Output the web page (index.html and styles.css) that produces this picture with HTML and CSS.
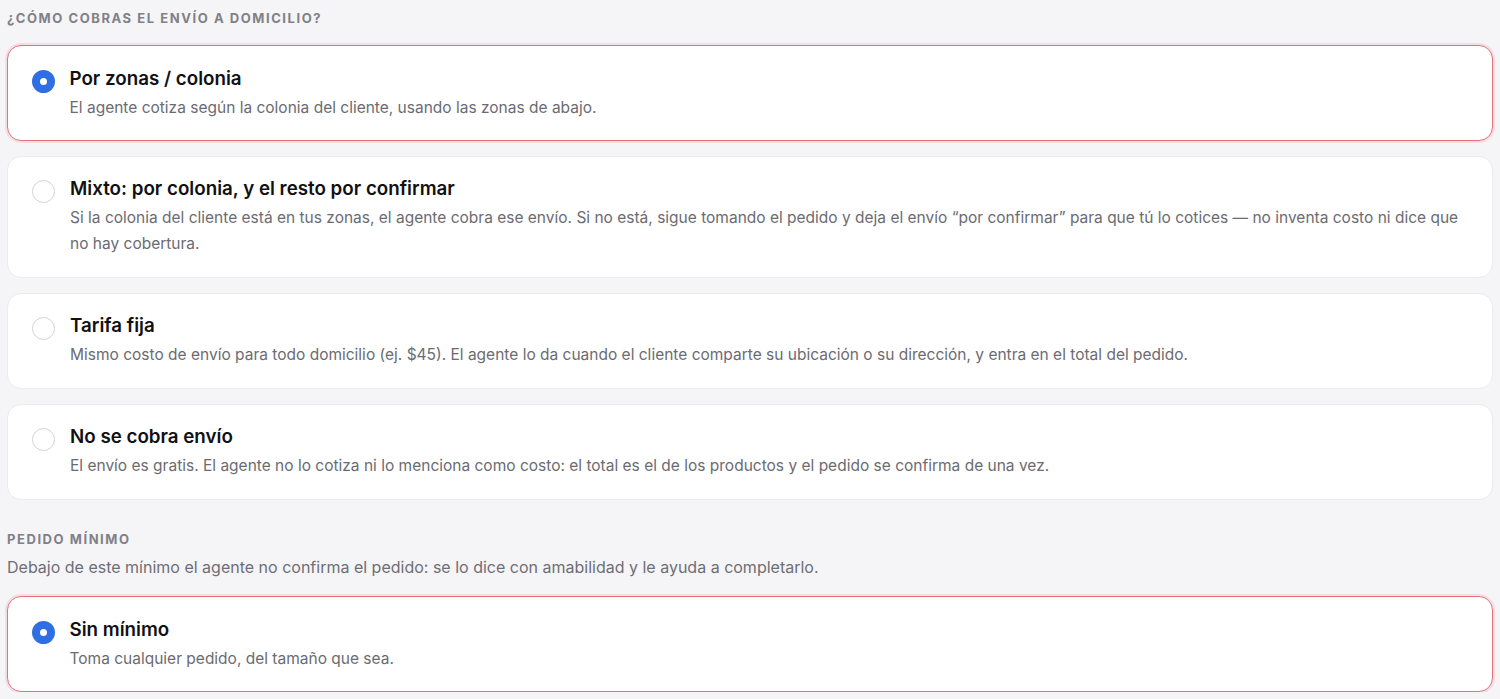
FILE: index.html
```html
<!DOCTYPE html>
<html lang="es">
<head>
<meta charset="utf-8">
<link rel="stylesheet" href="styles.css">
</head>
<body>
<main class="page">
  <section class="section">
    <h2 class="section-title">¿Cómo cobras el envío a domicilio?</h2>
    <div class="options">
      <label class="option selected">
        <span class="radio"></span>
        <span class="option-body">
          <span class="option-title">Por zonas / colonia</span>
          <span class="option-desc">El agente cotiza según la colonia del cliente, usando las zonas de abajo.</span>
        </span>
      </label>
      <label class="option">
        <span class="radio"></span>
        <span class="option-body">
          <span class="option-title">Mixto: por colonia, y el resto por confirmar</span>
          <span class="option-desc">Si la colonia del cliente está en tus zonas, el agente cobra ese envío. Si no está, sigue tomando el pedido y deja el envío “por confirmar” para que tú lo cotices — no inventa costo ni dice que no hay cobertura.</span>
        </span>
      </label>
      <label class="option">
        <span class="radio"></span>
        <span class="option-body">
          <span class="option-title">Tarifa fija</span>
          <span class="option-desc">Mismo costo de envío para todo domicilio (ej. $45). El agente lo da cuando el cliente comparte su ubicación o su dirección, y entra en el total del pedido.</span>
        </span>
      </label>
      <label class="option">
        <span class="radio"></span>
        <span class="option-body">
          <span class="option-title">No se cobra envío</span>
          <span class="option-desc">El envío es gratis. El agente no lo cotiza ni lo menciona como costo: el total es el de los productos y el pedido se confirma de una vez.</span>
        </span>
      </label>
    </div>
  </section>
  <section class="section section-second">
    <h2 class="section-title">Pedido mínimo</h2>
    <p class="section-desc">Debajo de este mínimo el agente no confirma el pedido: se lo dice con amabilidad y le ayuda a completarlo.</p>
    <div class="options">
      <label class="option selected">
        <span class="radio"></span>
        <span class="option-body">
          <span class="option-title">Sin mínimo</span>
          <span class="option-desc">Toma cualquier pedido, del tamaño que sea.</span>
        </span>
      </label>
    </div>
  </section>
</main>
</body>
</html>
```

FILE: styles.css
```css
* { box-sizing: border-box; }
html, body {
  margin: 0;
  padding: 0;
  background: #f5f5f7;
  font-family: Inter, "Noto Sans", "Liberation Sans", sans-serif;
  color: #111114;
}
.page {
  padding: 10px 7px 0 7px;
}
.section-title {
  margin: 0 0 19px 0;
  font-size: 13px;
  line-height: 16px;
  font-weight: 700;
  letter-spacing: 0.12em;
  text-transform: uppercase;
  color: #808087;
}
.section-second {
  margin-top: 31px;
}
.section-second .section-title {
  margin-bottom: 10px;
}
.section-desc {
  margin: 0 0 19px 0;
  font-size: 16px;
  line-height: 20px;
  color: #6e6e75;
}
.options {
  display: flex;
  flex-direction: column;
  gap: 15px;
}
.option {
  display: flex;
  align-items: flex-start;
  gap: 15px;
  padding: 20px 24px 20px 24px;
  background: #ffffff;
  border: 1px solid #ebebef;
  border-radius: 14px;
  cursor: pointer;
}
.option.selected {
  border: 1.5px solid #e6707c;
  box-shadow: 0 0 0 2px rgba(231, 115, 126, 0.16);
  padding: 20.5px 23.5px 19.5px;
}
.radio {
  flex: 0 0 auto;
  width: 23px;
  height: 23px;
  margin-top: 3px;
  border-radius: 50%;
  border: 1.5px solid #d3d3d8;
  background: #fff;
}
.selected .radio {
  border: 8px solid #2f6fe3;
}
.option-body {
  display: flex;
  flex-direction: column;
  gap: 4px;
  min-width: 0;
}
.option-title {
  font-size: 18.75px;
  line-height: 24px;
  font-weight: 600;
  color: #111114;
}
.option-desc {
  font-size: 15.5px;
  line-height: 26px;
  color: #6b6b72;
}
```
